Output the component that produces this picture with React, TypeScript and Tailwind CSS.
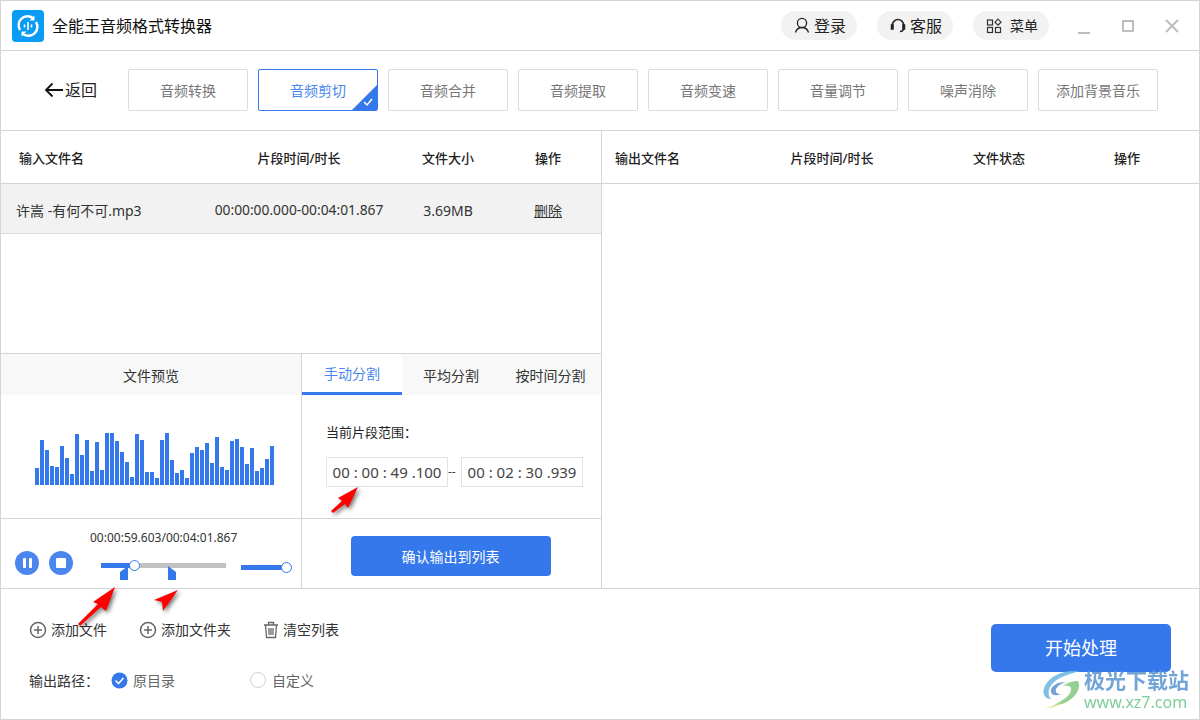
const tabs = ["音频转换", "音频剪切", "音频合并", "音频提取", "音频变速", "音量调节", "噪声消除", "添加背景音乐"];
const bars = [17, 45, 35, 19, 18, 39, 27, 11, 51, 30, 45, 14, 43, 15, 52, 52, 44, 33, 23, 8, 51, 45, 13, 13, 7, 45, 52, 25, 12, 15, 7, 32, 38, 35, 42, 22, 48, 18, 15, 44, 46, 38, 21, 37, 14, 17, 26, 39];

function PlusCircle() {
  return (
    <svg width="18" height="18" viewBox="0 0 18 18" fill="none" stroke="#666" strokeWidth="1.5">
      <circle cx="9" cy="9" r="7.5" />
      <path d="M9 5v8M5 9h8" />
    </svg>
  );
}

function TopPill({ icon, label, small }: { icon: React.ReactNode; label: string; small?: boolean }) {
  return (
    <div className="flex h-[29px] w-[76px] items-center justify-center gap-[4px] rounded-full bg-[#f2f2f2] pl-[2px]">
      {icon}
      <span className={small ? "ml-1 text-[14px] text-[#222]" : "text-[16px] text-[#222]"}>{label}</span>
    </div>
  );
}

export default function App() {
  return (
    <div className="relative flex h-[720px] w-[1200px] flex-col overflow-hidden border border-[#d5d5d5] bg-white font-['Noto_Sans','Noto_Sans_CJK_SC',sans-serif]">
      {/* title bar */}
      <div className="flex h-[50px] shrink-0 items-center border-b border-[#d5d5d5] pl-[11px]">
        <div className="flex h-[32px] w-[32px] items-center justify-center rounded-[4px] bg-[#0a9bf5]">
          <svg width="24" height="24" viewBox="0 0 24 24" fill="none" stroke="#fff" strokeWidth="2.4">
            <path d="M4 16A9 9 0 0 1 17 4" />
            <path d="M20 8A9 9 0 0 1 7 20" />
            <path d="M18.5 1.5v5h-5z" fill="#fff" stroke="none" />
            <path d="M5.5 22.5v-5h5z" fill="#fff" stroke="none" />
            <path d="M8.5 10.5v3M12 8v8M15.5 10.5v3" strokeWidth="1.6" />
          </svg>
        </div>
        <span className="ml-[8px] text-[16px] text-[#111]">全能王音频格式转换器</span>
        <div className="ml-auto flex items-center gap-[20px]">
          <TopPill
            label="登录"
            icon={
              <svg width="16" height="17" viewBox="0 0 16 17" fill="none" stroke="#222" strokeWidth="1.3">
                <circle cx="8" cy="6" r="4.6" />
                <path d="M1.5 15.5c1-3.4 3.4-5 6.5-5s5.500 1.600 6.500 5" />
              </svg>
            }
          />
          <TopPill
            label="客服"
            icon={
              <svg width="16" height="17" viewBox="0 0 16 17" fill="none" stroke="#222" strokeWidth="1.5">
                <path d="M2.500 11V8a5.500 5.500 0 0 1 11 0v3c0 2-1.500 3.500-3.500 3.500" />
                <rect x="1.500" y="8" width="1.500" height="4" fill="#222" />
                <rect x="13" y="8" width="1.500" height="4" fill="#222" />
              </svg>
            }
          />
          <TopPill
            label="菜单"
            small
            icon={
              <svg width="16" height="16" viewBox="0 0 16 16" fill="none" stroke="#333" strokeWidth="1.2">
                <rect x="1.500" y="2" width="5" height="5" />
                <rect x="1.500" y="9.500" width="5" height="5" />
                <rect x="9.500" y="9.500" width="5" height="5" />
                <path d="M12 1.200l3 3-3 3-3-3z" />
              </svg>
            }
          />
        </div>
        <div className="ml-[29px] mt-[14px] h-[2px] w-[12px] bg-[#bdbdbd]" />
        <div className="ml-[32px] h-[12px] w-[12px] rounded-[1px] border-2 border-[#bdbdbd]" />
        <svg className="ml-[31px] mr-[20px]" width="14" height="14" viewBox="0 0 14 14" stroke="#bdbdbd" strokeWidth="2">
          <path d="M1 1l12 12M13 1L1 13" />
        </svg>
      </div>

      {/* nav */}
      <div className="flex h-[80px] shrink-0 items-center border-b border-[#d5d5d5] pb-[2px] pl-[43px]">
        <div className="flex w-[84px] items-center">
          <svg width="20" height="16" viewBox="0 0 20 16" fill="none" stroke="#111" strokeWidth="1.800">
            <path d="M19 8H2M8.500 1.500L2 8l6.500 6.500" />
          </svg>
          <span className="ml-[1px] text-[16px] text-[#222]">返回</span>
        </div>
        <div className="flex gap-[10px]">
          {tabs.map((t, i) => (
            <div
              key={t}
              className={
                i === 1
                  ? "relative flex h-[42px] w-[120px] items-center justify-center overflow-hidden rounded-[2px] border border-[#3578ec] pt-[2px] text-[14px] text-[#4a86ee]"
                  : "flex h-[42px] w-[120px] items-center justify-center rounded-[2px] border border-[#dcdcdc] pt-[2px] text-[14px] text-[#777]"
              }
            >
              {t}
              {i === 1 && (
                <svg className="absolute bottom-0 right-0" width="25" height="25" viewBox="0 0 25 25">
                  <path d="M25 0v25H0z" fill="#3578ec" />
                  <path d="M12 17l3 3 5-6" fill="none" stroke="#fff" strokeWidth="1.500" />
                </svg>
              )}
            </div>
          ))}
        </div>
      </div>

      <div className="flex h-[458px] shrink-0 border-b border-[#d5d5d5]">
        {/* left */}
        <div className="flex w-[601px] shrink-0 flex-col border-r border-[#d5d5d5]">
          <div className="grid h-[53px] shrink-0 grid-cols-[200px_196px_102px_98px] items-center border-b border-[#d5d5d5] pt-[4px] text-center text-[13px] font-medium text-[#222]">
            <span className="pl-[18px] text-left">输入文件名</span>
            <span>片段时间/时长</span>
            <span>文件大小</span>
            <span>操作</span>
          </div>
          <div className="grid h-[50px] shrink-0 grid-cols-[200px_196px_102px_98px] items-center border-b border-[#dcdcdc] bg-[#f2f2f2] pt-[4px] text-center text-[14px] text-[#333]">
            <span className="pl-[15px] text-left">许嵩 -有何不可.mp3</span>
            <span className="whitespace-nowrap text-[13.8px]">00:00:00.000-00:04:01.867</span>
            <span>3.69MB</span>
            <span className="underline">删除</span>
          </div>
          <div className="h-[120px] shrink-0 border-b border-[#d5d5d5]" />
          <div className="flex min-h-0 flex-1">
            {/* preview */}
            <div className="flex w-[301px] shrink-0 flex-col border-r border-[#d5d5d5]">
              <div className="flex h-[41px] shrink-0 items-center justify-center bg-[#f8f8f8] pt-[1px] text-[14px] text-[#333]">文件预览</div>
              <div className="flex h-[124px] shrink-0 items-end gap-[1px] border-b border-[#d5d5d5] pb-[33px] pl-[34px]">
                {bars.map((h, i) => (
                  <div key={i} className="w-[4px] bg-[#3578ec]" style={{ height: h }} />
                ))}
              </div>
              <div className="relative flex-1 pl-[14px]">
                <div className="pl-[75px] pt-[11px] text-[12px] leading-[16px] text-[#333]">00:00:59.603/00:04:01.867</div>
                <div className="mt-[5px] flex items-start">
                  <div className="flex h-[24px] w-[24px] items-center justify-center gap-[3px] rounded-full bg-[#4a86ee]">
                    <div className="h-[10px] w-[3px] rounded-[1px] bg-white" />
                    <div className="h-[10px] w-[3px] rounded-[1px] bg-white" />
                  </div>
                  <div className="ml-[10px] flex h-[24px] w-[24px] items-center justify-center rounded-full bg-[#4a86ee]">
                    <div className="h-[10px] w-[10px] rounded-[1px] bg-white" />
                  </div>
                  {/* trim slider */}
                  <div className="relative ml-[28px] mt-[12px] h-[5px] w-[125px] bg-[#c2c2c2]">
                    <div className="h-full w-[33px] bg-[#3578ec]" />
                    <div className="absolute left-[28px] top-[-3px] h-[11px] w-[11px] rounded-full border border-[#3578ec] bg-white" />
                    <svg className="absolute left-[19px] top-[3px]" width="8" height="14" viewBox="0 0 8 14">
                      <path d="M0 14V6L8 0v14z" fill="#3578ec" />
                    </svg>
                    <svg className="absolute left-[67px] top-[3px]" width="8" height="14" viewBox="0 0 8 14">
                      <path d="M0 14V0l8 6v8z" fill="#3578ec" />
                    </svg>
                  </div>
                  {/* volume */}
                  <div className="relative ml-[15px] mt-[14px] h-[5px] w-[46px] bg-[#3578ec]">
                    <div className="absolute right-[-5px] top-[-3px] h-[11px] w-[11px] rounded-full border border-[#3578ec] bg-white" />
                  </div>
                </div>
              </div>
            </div>
            {/* split */}
            <div className="flex flex-1 flex-col">
              <div className="flex h-[41px] shrink-0 bg-[#f8f8f8] text-[14px] text-[#333]">
                <div className="flex w-[100px] items-center justify-center border-b-[3px] border-[#3578ec] bg-white text-[#4a86ee]">手动分割</div>
                <div className="flex w-[98px] items-center justify-center pt-[1px]">平均分割</div>
                <div className="flex flex-1 items-center justify-center whitespace-nowrap pt-[1px]">按时间分割</div>
              </div>
              <div className="flex h-[124px] shrink-0 flex-col border-b border-[#d5d5d5] pl-[24px] pt-[27px]">
                <div className="text-[13px] leading-[20px] text-[#222]">当前片段范围：</div>
                <div className="mt-[15px] flex items-center">
                  <div className="flex h-[30px] w-[122px] items-center justify-center whitespace-pre border border-[#e3e3e3] text-[15px] text-[#444]">00 : 00 : 49 .100</div>
                  <span className="w-[13px] text-[12px] leading-none text-[#444]">--</span>
                  <div className="flex h-[30px] w-[122px] items-center justify-center whitespace-pre border border-[#e3e3e3] text-[15px] text-[#444]">00 : 02 : 30 .939</div>
                </div>
              </div>
              <div className="flex flex-1 justify-center pr-[2px] pt-[17px]">
                <div className="flex h-[40px] w-[200px] items-center justify-center rounded-[4px] bg-[#3578ec] text-[14px] text-white">确认输出到列表</div>
              </div>
            </div>
          </div>
        </div>
        {/* right */}
        <div className="flex-1">
          <div className="grid h-[53px] grid-cols-[140px_180px_154px_102px] items-center border-b border-[#d5d5d5] pt-[3px] text-center text-[13px] font-medium text-[#222]">
            <span className="pl-[13px] text-left">输出文件名</span>
            <span>片段时间/时长</span>
            <span>文件状态</span>
            <span>操作</span>
          </div>
        </div>
      </div>

      {/* bottom */}
      <div className="flex flex-1">
        <div className="flex-1 pl-[28px] pt-[31px]">
          <div className="flex h-[20px] items-center text-[14px] text-[#333]">
            <PlusCircle />
            <span className="ml-[4px] pb-[2px]">添加文件</span>
            <span className="ml-[32px]"><PlusCircle /></span>
            <span className="ml-[4px] pb-[2px]">添加文件夹</span>
            <svg className="ml-[32px]" width="16" height="18" viewBox="0 0 16 18" fill="none" stroke="#666" strokeWidth="1.300">
              <path d="M1 4h14M5.500 4V1.500h5V4M2.500 4l1 12.500h9l1-12.500M6 7v7M8 7v7M10 7v7" />
            </svg>
            <span className="ml-[4px] pb-[2px]">清空列表</span>
          </div>
          <div className="mt-[30px] flex h-[20px] items-center text-[14px]">
            <span className="text-[#333]">输出路径：</span>
            <svg className="ml-[12px]" width="17" height="17" viewBox="0 0 17 17">
              <circle cx="8.500" cy="8.500" r="8" fill="#3578ec" />
              <path d="M4.500 8.500l3 3 5-5.500" fill="none" stroke="#fff" strokeWidth="1.600" />
            </svg>
            <span className="ml-[5px] text-[#666]">原目录</span>
            <div className="ml-[75px] h-[16px] w-[16px] rounded-full border border-[#cfcfcf]" />
            <span className="ml-[6px] text-[#666]">自定义</span>
          </div>
        </div>
        <div className="mr-[28px] mt-[35px] flex h-[48px] w-[180px] items-center justify-center rounded-[5px] bg-[#3578ec] text-[18px] text-white">开始处理</div>
      </div>

      {/* red annotation arrows */}
      <svg className="absolute left-0 top-0 drop-shadow-[2px_2px_2px_rgba(0,0,0,0.55)]" width="400" height="640" viewBox="0 0 400 640" fill="#f00">
        <path d="M114 586L92 601l5 2-20 20 2 2 21-19 5 4z" />
        <path d="M177 589l-24 10 8 2 1 9z" />
        <path d="M357 486l-20 11 4 3-11 10 2 2 12-9 3 4z" />
      </svg>

      {/* watermark */}
      <div className="absolute bottom-[8px] right-[10px] flex items-center opacity-85">
        <svg width="40" height="38" viewBox="0 0 40 38" fill="none">
          <path d="M38 1C22-1 6 6 2 18c-2 7 2 11 7 11-4-4-3-11 3-17C19 6 28 4 38 1z" fill="#6bb6e0" />
          <path d="M24 12C14 12 8 17 9 22c1 4 6 4 10 2-4 0-6-2-5-5 2-4 6-6 10-7z" fill="#5d90c8" />
          <path d="M36 11c4 8-4 19-16 23-4 1-8 2-12 4 8-6 20-10 21-18 1-4-3-5-8-4 5-4 11-5 15-5z" fill="#7fc97f" />
          <path d="M3 38c6-1 12-3 17-6-4 4-11 6-17 6z" fill="#e4e46a" />
        </svg>
        <div className="ml-[2px] flex flex-col">
          <span className="text-[21px] font-bold leading-[26px] text-[#5b95d0]">极光下载站</span>
          <span className="text-[16px] leading-[18px] text-[#68c488]">www.xz7.com</span>
        </div>
      </div>
    </div>
  );
}
